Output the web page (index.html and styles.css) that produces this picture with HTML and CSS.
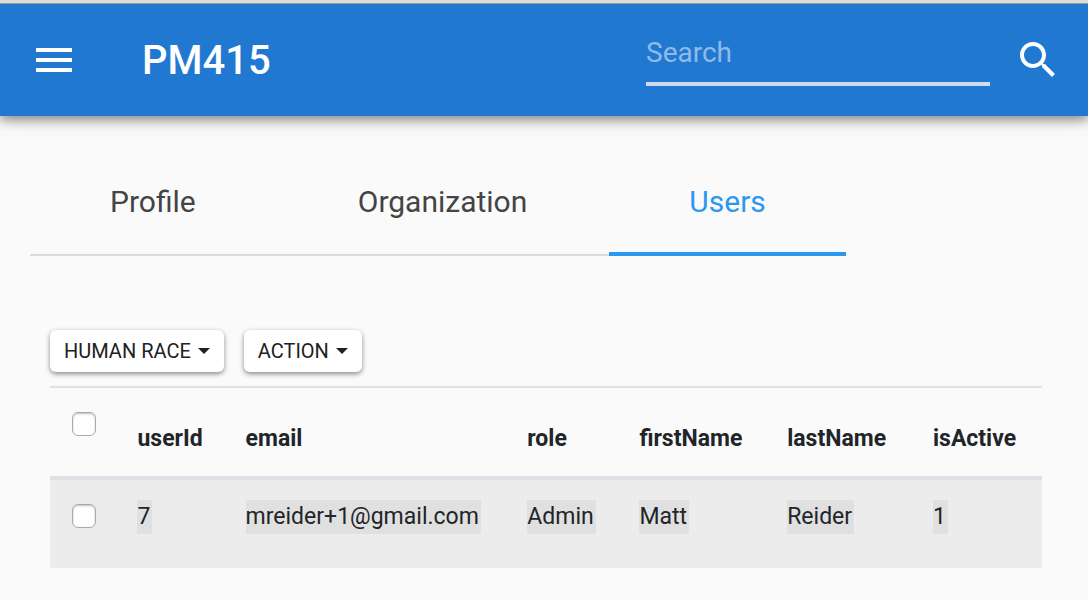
FILE: index.html
```html
<!DOCTYPE html>
<html lang="en">
<head>
<meta charset="utf-8">
<meta name="viewport" content="width=device-width, initial-scale=1">
<title>PM415</title>
<link rel="stylesheet" href="styles.css">
</head>
<body>
<header class="app-bar">
  <button class="icon-button" type="button" aria-label="Menu">
    <svg class="icon" viewBox="0 0 24 24" aria-hidden="true"><path d="M3 18h18v-2H3v2zm0-5h18v-2H3v2zm0-7v2h18V6H3z"/></svg>
  </button>
  <h1 class="brand">PM415</h1>
  <form class="search">
    <input class="search-input" type="text" placeholder="Search" aria-label="Search">
    <button class="icon-button" type="button" aria-label="Submit search">
      <svg class="icon" viewBox="0 0 24 24" aria-hidden="true"><path d="M15.5 14h-.79l-.28-.27C15.41 12.59 16 11.11 16 9.5 16 5.91 13.09 3 9.5 3S3 5.91 3 9.5 5.91 16 9.5 16c1.61 0 3.09-.59 4.23-1.57l.27.28v.79l5 4.99L20.49 19l-4.99-5zm-6 0C7.01 14 5 11.99 5 9.5S7.01 5 9.5 5 14 7.01 14 9.5 11.99 14 9.5 14z"/></svg>
    </button>
  </form>
</header>
<main class="content">
  <nav class="tabs">
    <a class="tab" href="#profile">Profile</a>
    <a class="tab" href="#organization">Organization</a>
    <a class="tab tab-active" href="#users" aria-current="page">Users</a>
  </nav>
  <section class="users">
    <div class="toolbar">
      <button class="dropdown" type="button">HUMAN RACE<span class="caret"></span></button>
      <button class="dropdown" type="button">ACTION<span class="caret"></span></button>
    </div>
    <table class="table">
      <colgroup>
        <col class="col-check"><col class="col-id"><col class="col-email"><col class="col-role"><col class="col-first"><col class="col-last"><col class="col-active">
      </colgroup>
      <thead>
        <tr>
          <th class="check-cell"><input class="check" type="checkbox" aria-label="Select all users"></th>
          <th>userId</th>
          <th>email</th>
          <th>role</th>
          <th>firstName</th>
          <th>lastName</th>
          <th>isActive</th>
        </tr>
      </thead>
      <tbody>
        <tr>
          <td class="check-cell"><input class="check" type="checkbox" aria-label="Select user 7"></td>
          <td><span class="value">7</span></td>
          <td><span class="value">mreider+1@gmail.com</span></td>
          <td><span class="value">Admin</span></td>
          <td><span class="value">Matt</span></td>
          <td><span class="value">Reider</span></td>
          <td><span class="value">1</span></td>
        </tr>
      </tbody>
    </table>
  </section>
</main>
</body>
</html>
```
FILE: styles.css
```css
* {
  box-sizing: border-box;
}

body {
  margin: 0;
  border-top: 3px solid #dcdcdc;
  background: #fafafa;
  color: #212529;
  font-family: Roboto, "Liberation Sans", sans-serif;
}

.app-bar {
  display: flex;
  align-items: center;
  padding: 32px 26px 32px 30px;
  border-top: 1px solid #999;
  background: #2178d1;
  color: #fff;
  box-shadow: 0 4px 10px rgba(0, 0, 0, 0.4), 0 4px 20px rgba(0, 0, 0, 0.1);
}

.icon-button {
  display: flex;
  padding: 0;
  border: 0;
  background: none;
  color: inherit;
}

.icon {
  width: 48px;
  height: 48px;
  fill: currentColor;
}

.brand {
  margin: 0 0 0 64px;
  padding-top: 2px;
  font-size: 40px;
  font-weight: 500;
  line-height: 46px;
}

.search {
  display: flex;
  align-items: center;
  gap: 24px;
  width: 416px;
  margin: -2px 0 -2px auto;
}

.search-input {
  flex: 1;
  min-width: 0;
  height: 52px;
  padding: 0 0 12px;
  border: 0;
  border-bottom: 4px solid #cddcef;
  border-radius: 0;
  outline: 0;
  background: none;
  color: #fff;
  font: 28px Roboto, "Liberation Sans", sans-serif;
}

.search-input::placeholder {
  color: #90bbe8;
  opacity: 1;
}

.content {
  padding: 36px 30px 32px;
}

.tabs {
  display: flex;
  gap: 2px;
  width: fit-content;
  box-shadow: inset 0 -2px #dcdcdc;
}

.tab {
  padding: 30px 80px;
  border-bottom: 4px solid transparent;
  color: #444;
  font-size: 30px;
  line-height: 40px;
  text-decoration: none;
}

.tab-active {
  border-color: #2b98f0;
  color: #2b98f0;
}

.users {
  padding: 74px 16px 0 20px;
}

.toolbar {
  display: flex;
  gap: 20px;
  margin-bottom: 14px;
}

.dropdown {
  display: flex;
  align-items: center;
  gap: 7px;
  height: 42px;
  padding: 0 14px;
  border: 0;
  border-radius: 6px;
  background: #fff;
  box-shadow: 0 2px 5px rgba(0, 0, 0, 0.45);
  color: #212121;
  font: 20px Roboto, "Liberation Sans", sans-serif;
}

.caret {
  border: 6px solid transparent;
  border-top-color: currentColor;
  border-bottom: 0;
}

.table {
  width: 100%;
  border-collapse: separate;
  border-spacing: 0;
  border-top: 2px solid #dee2e6;
  table-layout: fixed;
  font-size: 23px;
  line-height: 34px;
  text-align: left;
}

.col-check { width: 6.8%; }
.col-id { width: 10.9%; }
.col-email { width: 28.4%; }
.col-role { width: 11.3%; }
.col-first { width: 14.9%; }
.col-last { width: 14.7%; }
.col-active { width: 13%; }

.table th,
.table td {
  height: 88px;
  padding: 20px;
}

.table th {
  height: 92px;
  border-bottom: 4px solid #dee2e6;
  font-weight: 700;
  vertical-align: bottom;
}

.table td {
  background: #ececec;
  vertical-align: top;
}

.table .check-cell {
  padding: 24px 0 0 22px;
  vertical-align: top;
}

.check {
  display: block;
  width: 24px;
  height: 24px;
  margin: 0;
  border: 1px solid #aaa;
  border-radius: 6px;
  appearance: none;
  background: #fff;
  box-shadow: inset 0 1px 2px rgba(0, 0, 0, 0.25);
}

.check:checked {
  background: #2b98f0;
}

.value {
  display: inline-block;
  padding-right: 2px;
  background: #e0e0e0;
}
```
